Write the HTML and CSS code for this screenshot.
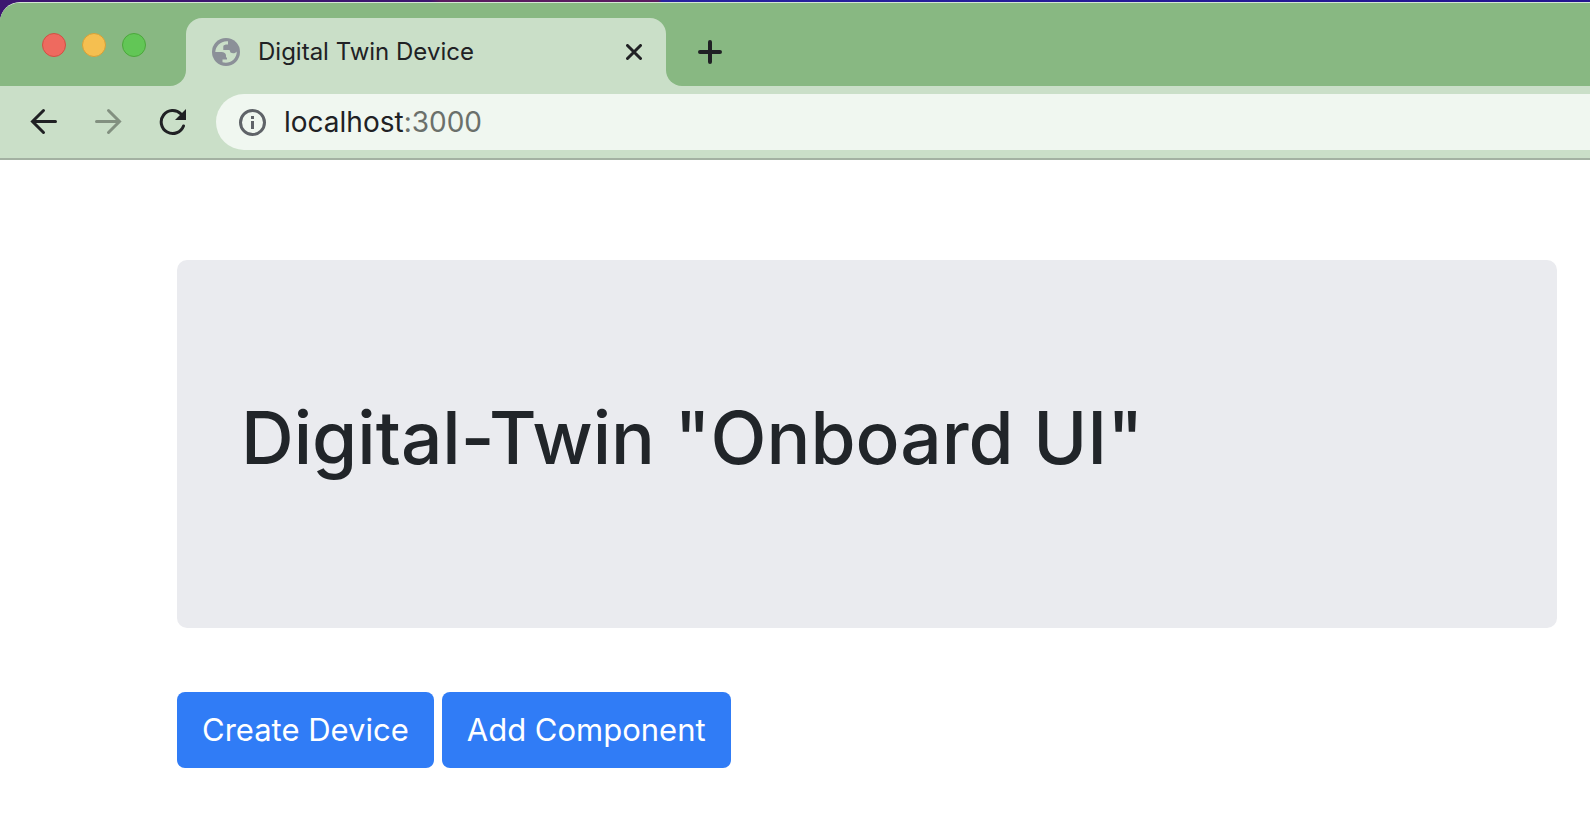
FILE: index.html
```html
<!DOCTYPE html>
<html lang="en">
<head>
<meta charset="utf-8">
<title>Digital Twin Device</title>
<link rel="stylesheet" href="styles.css">
</head>
<body>
<div class="desktop">
  <header class="window">
    <div class="tab-strip">
      <div class="lights">
        <button class="light light-close" aria-label="Close window"></button>
        <button class="light light-minimize" aria-label="Minimize window"></button>
        <button class="light light-zoom" aria-label="Zoom window"></button>
      </div>
      <div class="tab">
        <svg class="favicon" viewBox="0 0 28 28" aria-hidden="true">
          <circle cx="14" cy="14" r="14" fill="#8b9098"/>
          <path fill="#cadfc8" d="M16 3.200C9 2.500 3.500 8 3.300 14H9.500C12 14 14 15.500 14 17.500V19.500H15V21.500H10.500V24.300C17.500 26.300 24.800 21.500 24.800 13.500C23.500 15.500 20.500 15.800 18.500 14.500L17.500 12H11.300V8.500C11.300 7 13 6.500 16 6.500Z"/>
        </svg>
        <span class="tab-title">Digital Twin Device</span>
        <button class="icon-button" aria-label="Close tab">
          <svg class="icon-close" viewBox="0 0 16 16"><path d="M1.500 1.500 14.500 14.500M14.500 1.500 1.500 14.500"/></svg>
        </button>
      </div>
      <div class="strip-end">
        <button class="icon-button" aria-label="New tab">
          <svg class="icon-plus" viewBox="0 0 24 24"><path d="M12 2V22M2 12H22"/></svg>
        </button>
      </div>
    </div>
    <nav class="toolbar">
      <button class="icon-button" aria-label="Back">
        <svg class="icon-nav" viewBox="0 0 28 28"><path d="M25.500 13.500H3M13.500 2.500 2.500 13.500 13.500 24.500"/></svg>
      </button>
      <button class="icon-button forward" aria-label="Forward">
        <svg class="icon-nav" viewBox="0 0 28 28"><path d="M2.500 13.500H25M14.500 2.500 25.500 13.500 14.500 24.500"/></svg>
      </button>
      <button class="icon-button" aria-label="Reload">
        <svg class="icon-nav" viewBox="0 0 28 28"><path d="M25.500 18A11.500 11.500 0 1 1 23 6"/><path class="solid" d="M28 1V12H17Z"/></svg>
      </button>
      <div class="address">
        <svg class="icon-info" viewBox="0 0 28 28" aria-hidden="true"><circle cx="14.500" cy="14.500" r="12"/><path d="M14.500 13V21M14.500 8V11"/></svg>
        <span class="url">localhost<span class="port">:3000</span></span>
      </div>
    </nav>
  </header>
</div>
<main class="page">
  <section class="jumbotron">
    <h1 class="heading">Digital-Twin "Onboard UI"</h1>
  </section>
  <div class="actions">
    <button class="button">Create Device</button>
    <button class="button">Add Component</button>
  </div>
</main>
</body>
</html>
```
FILE: styles.css
```css
* { box-sizing: border-box; }
body {
  margin: 0;
  background: #fff;
  color: #212529;
  font-family: Inter, "Liberation Sans", sans-serif;
}
button {
  margin: 0;
  padding: 0;
  border: 0;
  background: none;
  font: inherit;
  color: inherit;
}
svg { display: block; flex: none; }
.desktop {
  padding-top: 2px;
  background: linear-gradient(90deg, #3c1670 0, #3c1670 430px, #5a1a60 440px, #5a1a60 658px, #2822a0 662px, #241490 100%);
}
.window {
  overflow: hidden;
  border-top: 1px solid #d5e6d3;
  border-top-left-radius: 20px;
  background: #cadfc8;
}
/* The green cells curve away from the tab; the gradient fills its top corners. */
.tab-strip {
  display: flex;
  height: 83px;
  background: linear-gradient(#88b882 50%, #cadfc8 50%);
}
.lights {
  display: flex;
  gap: 16px;
  width: 186px;
  padding: 30px 0 0 42px;
  border-bottom-right-radius: 16px;
  background: #88b882;
}
.light {
  width: 24px;
  height: 24px;
  border: 1px solid;
  border-radius: 50%;
}
.light-close { background: #ee6a5f; border-color: #d05044; }
.light-minimize { background: #f5bf50; border-color: #d6a038; }
.light-zoom { background: #62c656; border-color: #4ca73c; }
.tab {
  display: flex;
  align-items: center;
  width: 480px;
  margin-top: 15px;
  padding: 0 24px 0 26px;
  border-radius: 16px 16px 0 0;
  background: #cadfc8;
}
.favicon { width: 28px; height: 28px; }
.tab-title {
  flex: 1;
  padding-left: 18px;
  font-size: 24px;
  line-height: 32px;
  color: #202124;
}
.icon-button {
  display: flex;
  align-items: center;
  justify-content: center;
  color: #202124;
}
.icon-button svg, .icon-info {
  fill: none;
  stroke: currentColor;
  stroke-width: 3;
  stroke-linecap: round;
}
.icon-button .solid { fill: currentColor; stroke: none; }
.icon-close { width: 16px; height: 16px; }
.icon-plus { width: 24px; height: 24px; }
.icon-button .icon-plus { stroke-width: 4; }
.strip-end {
  display: flex;
  flex: 1;
  align-items: center;
  padding: 15px 0 0 32px;
  border-bottom-left-radius: 16px;
  background: #88b882;
}
.toolbar {
  display: flex;
  align-items: center;
  gap: 36px;
  height: 74px;
  padding-left: 30px;
  border-bottom: 2px solid #a3b1a2;
}
.icon-nav { width: 28px; height: 28px; }
.forward { color: #829080; }
.address {
  display: flex;
  flex: 1;
  align-items: center;
  gap: 18px;
  height: 56px;
  margin-left: -6px;
  padding-left: 22px;
  border-radius: 28px 0 0 28px;
  background: #f0f7f0;
}
.icon-info { width: 28px; height: 28px; color: #5f6368; }
.icon-info path { stroke-linecap: butt; }
.url { font-size: 28px; line-height: 36px; color: #202124; }
.port { color: #6b706b; }
.page { padding: 100px 33px 32px 177px; }
.jumbotron {
  margin-bottom: 64px;
  padding: 128px 64px;
  border-radius: 10px;
  background: #eaebef;
}
.heading {
  margin: 0 0 12px;
  font-size: 73px;
  font-weight: 500;
  line-height: 100px;
}
.actions { display: flex; gap: 8px; }
.button {
  padding: 14px 25px;
  border-radius: 8px;
  background: #307cf6;
  color: #fff;
  font-size: 31px;
  line-height: 48px;
}
```
